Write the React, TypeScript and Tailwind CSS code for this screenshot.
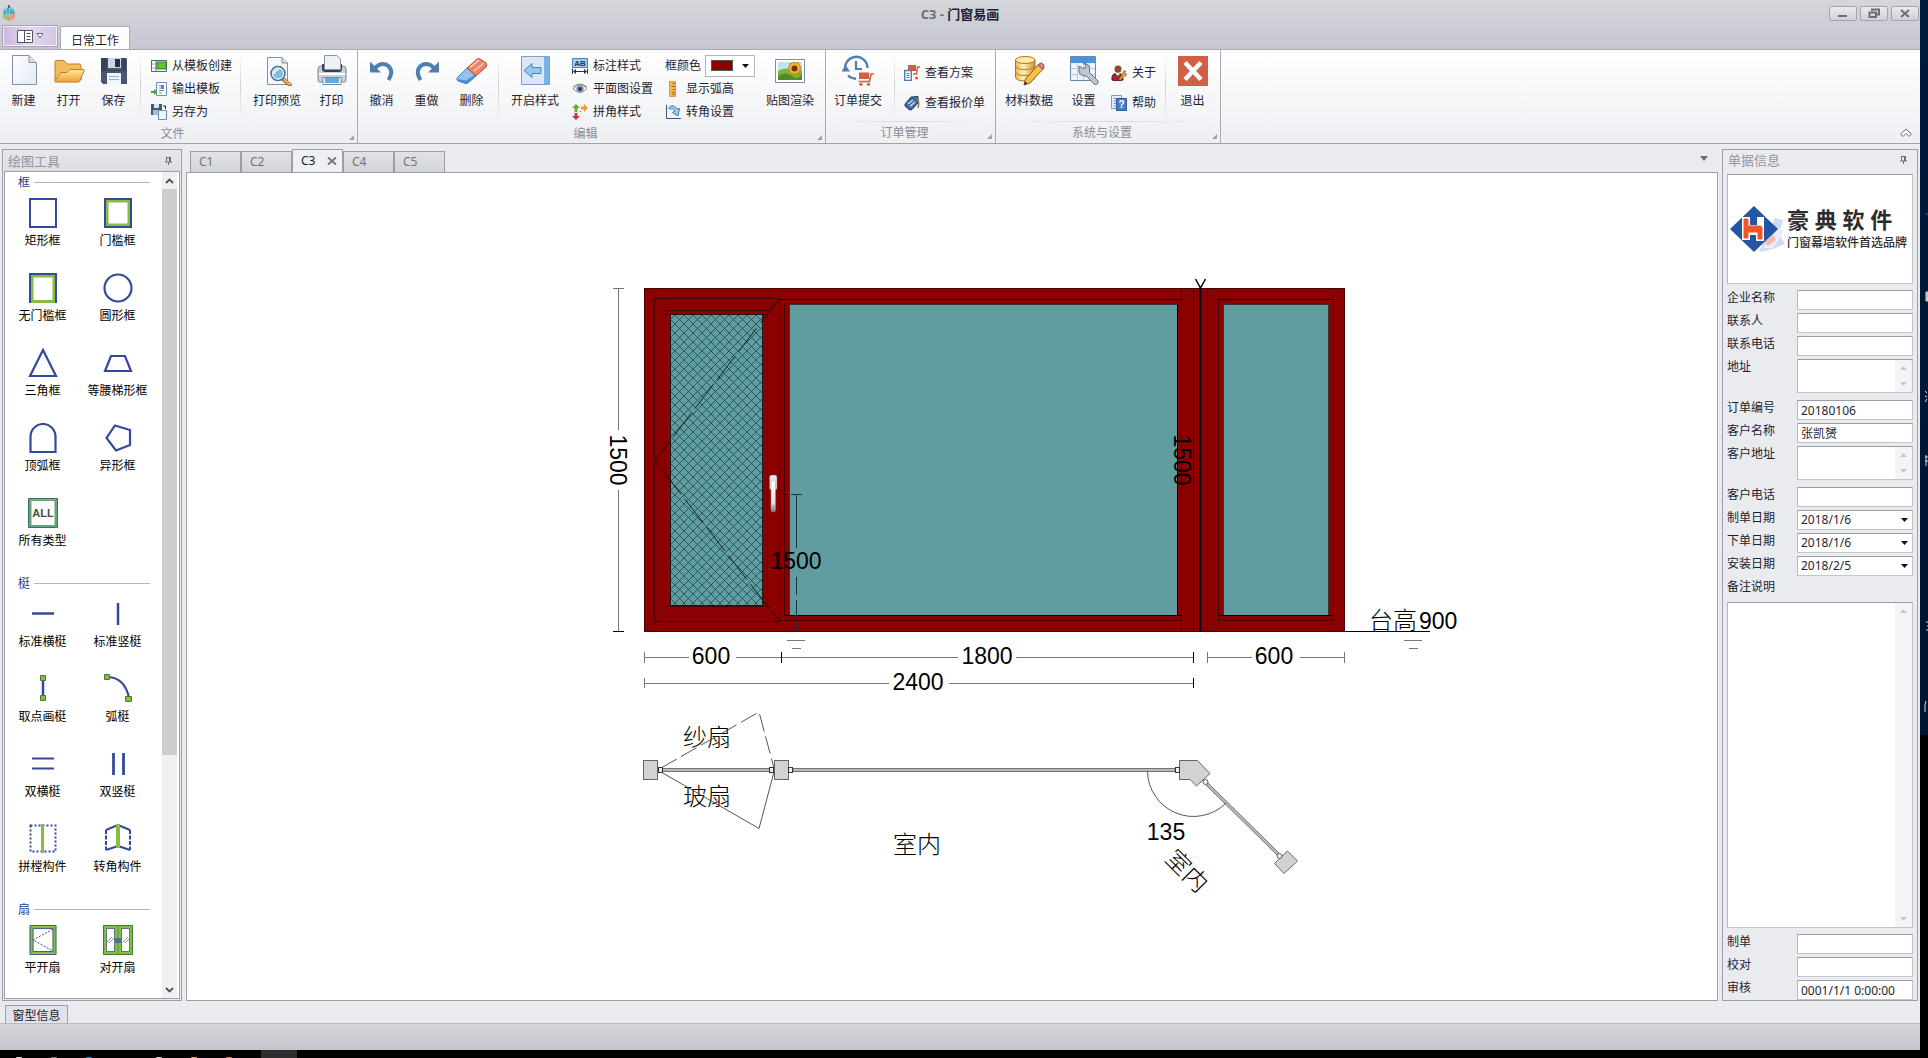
import React, { useState } from 'react';

const BLUE = '#34499b';
const GREEN = '#86bc40';

/* ---------- ribbon icons, 32px ---------- */

const NewIcon = () => (
    <svg width="32" height="32" viewBox="0 0 32 32">
        <defs><linearGradient id="page" x1="0" y1="0" x2="1" y2="1"><stop offset="0" stopColor="#fff" /><stop offset="1" stopColor="#e3e9f3" /></linearGradient></defs>
        <path d="M4.500 1.500H21L28.500 9V30.500H4.500Z" fill="url(#page)" stroke="#8191ab" />
        <path d="M21 1.500V8.500H28" fill="#d3deed" stroke="#8191ab" />
    </svg>
);

const OpenIcon = () => (
    <svg width="32" height="32" viewBox="0 0 32 32">
        <defs><linearGradient id="folder" x1="0" y1="0" x2="0" y2="1"><stop offset="0" stopColor="#ffe6a0" /><stop offset="1" stopColor="#efa236" /></linearGradient></defs>
        <path d="M2 26V8Q2 6.500 3.500 6.500H11L14 10H26Q28 10 28 12V26Z" fill="#f3bd5f" stroke="#bb7d25" />
        <path d="M2.500 28Q1.500 28 2 26.500L8 18.500H14L17 15.500H30.500Q31.500 15.500 31 17L27 26.500Q26.500 28 25 28Z" fill="url(#folder)" stroke="#bb7d25" />
    </svg>
);

const SaveIcon = () => (
    <svg width="32" height="32" viewBox="0 0 32 32">
        <path d="M3 4H28L29 5V30H5L3 28Z" fill="#4b566e" />
        <path d="M10 4H23V14H10Z" fill="#cdd6e3" />
        <path d="M17 5H22V13H17Z" fill="#27303f" />
        <path d="M3 4H9V16H24V4H28V17H3Z" fill="#39435a" />
        <path d="M9 19H23V30H9Z" fill="#eef4fb" />
        <path d="M11 22.500H21M11 25.500H21" stroke="#8eb0d6" />
    </svg>
);

const PreviewIcon = () => (
    <svg width="32" height="32" viewBox="0 0 32 32">
        <path d="M6.500 3.500H21L26.500 9V30.500H6.500Z" fill="#f6f8fc" stroke="#8191ab" />
        <path d="M21 3.500V9H26.500" fill="#d3deed" stroke="#8191ab" />
        <path d="M22 25L29 31" stroke="#a96a2c" strokeWidth="4" strokeLinecap="round" />
        <path d="M23 25.500L29 30.500" stroke="#f1b565" strokeWidth="2" strokeLinecap="round" />
        <circle cx="17" cy="19.500" r="7" fill="#b5dcf7" stroke="#4c6c94" strokeWidth="1.500" />
        <circle cx="17" cy="19.500" r="5.500" fill="#7dbdea" stroke="#fff" />
        <path d="M13 20Q14 15.500 18 15.500" stroke="#fff" strokeWidth="1.500" fill="none" />
    </svg>
);

const PrintIcon = () => (
    <svg width="32" height="32" viewBox="0 0 32 32">
        <path d="M2 15Q2 12 5 12H27Q30 12 30 15V26Q30 28 28 28H4Q2 28 2 26Z" fill="#c7cfdb" stroke="#7c8797" />
        <path d="M3 20H29" stroke="#fff" strokeWidth="2" />
        <path d="M6 10H26V15Q26 18 23 18H9Q6 18 6 15Z" fill="#3a4251" />
        <path d="M8.500 1.500H21L24.500 5V15.500H8.500Z" fill="#eef1f6" stroke="#8a94a6" />
        <path d="M7 23.500H25V30.500H7Z" fill="#fff" stroke="#7c8797" />
        <path d="M9 24H23V29H9Z" fill="#62aae2" />
    </svg>
);

const UndoIcon = () => (
    <svg width="32" height="32" viewBox="0 0 32 32">
        <path d="M9 14Q14 8.500 20 10.500Q29 15 22.500 26" fill="none" stroke="#4f80ad" strokeWidth="4" />
        <path d="M4 7.500L4 18.500H15Z" fill="#4f80ad" />
    </svg>
);

const RedoIcon = () => (
    <svg width="32" height="32" viewBox="0 0 32 32">
        <path d="M23 14Q18 8.500 12 10.500Q3 15 9.500 26" fill="none" stroke="#4f80ad" strokeWidth="4" />
        <path d="M28 7.500L28 18.500H17Z" fill="#4f80ad" />
    </svg>
);

const EraserIcon = () => (
    <svg width="32" height="32" viewBox="0 0 32 32">
        <path d="M1 24L11 14L20 22L12 29Q10 30 8 29L2 27Q0.500 26 1 24Z" fill="#8ec3f2" stroke="#547db0" />
        <path d="M1 25L10 26.500L20 20V22L12 29Q10 30 8 29L2 27Z" fill="#4c8ed6" />
        <path d="M11 14L21 5Q22.500 4 24 5L30 9Q31.500 10.500 30 13L20 22Z" fill="#ec8468" stroke="#b94d35" />
        <path d="M14 13.500L23 6M18 17L28 9" stroke="#fbd0c0" strokeWidth="1.500" />
    </svg>
);

const OpenStyleIcon = () => (
    <svg width="32" height="32" viewBox="0 0 32 32">
        <path d="M2.500 2.500H30.500V30.500H2.500Z" fill="#dbe6f5" stroke="#7e9fc8" />
        <path d="M25 3H30V30H25Z" fill="#78b5e6" />
        <path d="M5 16.500L13 9.500V13.500H22V19.500H13V23.500Z" fill="#8fc9f1" stroke="#4785b7" />
    </svg>
);

const RenderIcon = () => (
    <svg width="32" height="32" viewBox="0 0 32 32">
        <path d="M1.500 5.500H30.500V28.500H1.500Z" fill="#fff" stroke="#7d8ca8" />
        <path d="M4 8H28V17H4Z" fill="#c0e3f2" />
        <path d="M4 17Q12 12 17 17T28 15V26H4Z" fill="#79b43c" />
        <path d="M4 22Q12 17 18 22T28 20V26H4Z" fill="#4e8c25" />
        <path d="M19.500 8L21.500 9L24.500 8.500L25 11L27 13L26 15.500L26 18L23.500 19L21 20.500L18.500 19.500L16 19L15.500 16.500L14 14L15.500 11.500L16 9.500L18 9.500Z" fill="#f5b32c" stroke="#d27c17" />
        <circle cx="20.500" cy="14.500" r="3" fill="#6a3a17" />
    </svg>
);

const OrderIcon = () => (
    <svg width="32" height="32" viewBox="0 0 32 32">
        <path d="M3.500 17A11.200 11.200 0 1 1 25.500 14M6 21.500Q9 24.500 14 24.800" fill="none" stroke="#4f80ad" strokeWidth="2.400" />
        <path d="M-0.500 17.500L3.500 11L8 17.500Z" fill="#4f80ad" />
        <path d="M14 7V15H20" fill="none" stroke="#4f80ad" strokeWidth="2.200" />
        <path d="M17 18.500H27V25H17Z" fill="#d05f40" />
        <path d="M32 20H29L27.500 27.500H16.500" fill="none" stroke="#d05f40" strokeWidth="1.600" />
        <circle cx="19" cy="30.300" r="1.600" fill="#d05f40" /><circle cx="26.500" cy="30.300" r="1.600" fill="#d05f40" />
    </svg>
);

const MaterialIcon = () => (
    <svg width="32" height="32" viewBox="0 0 32 32">
        <defs><linearGradient id="gold" x1="0" x2="1"><stop offset="0" stopColor="#f0b545" /><stop offset="0.400" stopColor="#fff0b8" /><stop offset="1" stopColor="#d8902a" /></linearGradient></defs>
        <path d="M2.500 6V23Q3 27 12 27T22 23V6Z" fill="url(#gold)" stroke="#a9762a" />
        <ellipse cx="12.250" cy="6" rx="9.750" ry="3.500" fill="#ffe9a6" stroke="#a9762a" />
        <path d="M2.500 12Q4 15.500 12 15.500T22 12M2.500 18Q4 21.500 12 21.500T22 18" fill="none" stroke="#b37c27" />
        <path d="M11 31L12.500 25L26 10L31 14L17 29Z" fill="#f6c044" stroke="#8a5a1c" />
        <path d="M25 11L27.500 9Q31.500 9.500 31 13L29.500 15.500Z" fill="#e3808c" stroke="#95424f" />
        <path d="M11 31L12 27.500L14.500 29.500Z" fill="#333" />
    </svg>
);

const SettingsIcon = () => (
    <svg width="32" height="32" viewBox="0 0 32 32">
        <path d="M2.500 2.500H27.500V26.500H2.500Z" fill="#eef4fb" stroke="#6d88ad" />
        <path d="M3 3H27V9H3Z" fill="#4b93d8" />
        <path d="M3 14.500H27M3 20.500H27M9.500 9V26M15.500 9V26M21.500 9V26" stroke="#b5cbe4" />
        <path d="M11 12L15 14.500L17.500 14L18 11L15.500 9.500Q21 9.500 21.500 14.500L21.500 18.500L30 27Q30.500 31 26.500 30.500L18.500 22Q12 22.500 11 17Z" fill="#bdc6d3" stroke="#5e6b80" />
    </svg>
);

const ExitIcon = () => (
    <svg width="32" height="32" viewBox="0 0 32 32">
        <path d="M1 2H31V32H1Z" fill="#d05f45" />
        <path d="M8 8.500L24 25.500M24 8.500L8 25.500" stroke="#fff" strokeWidth="4.500" />
    </svg>
);

/* ---------- ribbon icons, 16px ---------- */

const smallIcons: Record<string, React.ReactNode> = {
    fromTemplate: (
        <g><path d="M.5 2.500H15.500V13.500H.5Z" fill="#fff" stroke="#44689b" /><path d="M1 6H15M1 10H15" stroke="#8aa8cf" /><path d="M5 2V14" stroke="#44689b" /><path d="M6 4H15V11H6Z" fill="#64c12f" stroke="#3a8714" /></g>
    ),
    exportTemplate: (
        <g><path d="M5.500 1.500H15.500V14.500H5.500Z" fill="#fff" stroke="#6a8fbd" /><path d="M8 4.500H13M8 7H13M8 9.500H13M8 12H11" stroke="#6a8fbd" /><path d="M10 4H13V8H10Z" fill="#5f84b5" /><path d="M0 10H3V8L6.500 11L3 14V12H0Z" fill="#4ba527" /></g>
    ),
    saveAs: (
        <g><path d="M0 0H11V11H0Z" fill="#4b566e" /><path d="M3 0H8V4H3Z" fill="#dde4ee" /><path d="M2 6H9V11H2Z" fill="#a9bdd8" /><path d="M7.500 6.500H15.500V15.500H7.500Z" fill="#f0f6fd" stroke="#6a8fbd" /><path d="M12 2H14.500V5" fill="none" stroke="#222" /></g>
    ),
    dimension: (
        <g><path d="M.5 .5H15.500V9.500H.5Z" fill="#9ecdf3" stroke="#5380b3" /><text x="8" y="8" textAnchor="middle" fontSize="8" fontWeight="700" fill="#1c3a63">AB</text><path d="M.5 10.500V16M15.500 10.500V16M2 13.500H14" stroke="#1d3357" /><path d="M1 13.500L4 11V16ZM15 13.500L12 11V16Z" fill="#1d3357" /></g>
    ),
    eye: (
        <g><path d="M1 8Q8 0 15 7.500Q8 15 1 8Z" fill="#fff" stroke="#a38b70" /><circle cx="8" cy="8" r="3.800" fill="#7f9dc4" /><circle cx="8" cy="8" r="2" fill="#2a3c5c" /><path d="M1 6Q8 0 15 6" fill="none" stroke="#8f7f6c" /></g>
    ),
    corner: (
        <g><path d="M4 0L8 4H5.500V8H2.500V4H0Z" fill="#6bab31" /><path d="M16 4L12 0V2.500H9V5.500H12V8Z" fill="#ee9b3b" /><path d="M4 16L8 12H5.500V9H2.500V12H0Z" fill="#c8373c" /><path d="M8 7L9 8" stroke="#555" /></g>
    ),
    ruler: (
        <g><path d="M4.500 .5H10.500V15.500H4.500Z" fill="#f8b64c" stroke="#dd9a38" /><path d="M7.500 2.500H10M6.500 5.500H10M7.500 8.500H10M6.500 11.500H10M7.500 13.500H10" stroke="#9a671f" /></g>
    ),
    rotate: (
        <g><path d="M1.500 1V14.500H16" fill="none" stroke="#3a5580" /><path d="M3.500 4Q8 -1 12 5L14.500 4.500L13 12L7.500 8.500L10 7Q7.500 3 5 5.500Z" fill="#9cd0f4" stroke="#4178ad" /></g>
    ),
    viewPlan: (
        <g><path d="M4 0H12V6H4Z" fill="#d05f40" /><path d="M16 2H13.500L12.500 9H9" fill="none" stroke="#d05f40" strokeWidth="1.500" /><circle cx="12.500" cy="13" r="1.600" fill="#d05f40" /><path d="M.7 5.500H7.300V15.500H.7Z" fill="#fff" stroke="#4f80ad" strokeWidth="1.400" /><path d="M2.500 8.500H5.500M2.500 10.500H5.500M2.500 12.500H5.500" stroke="#4f80ad" /></g>
    ),
    quote: (
        <g><path d="M1 9L7 2L14 1.500L14 8L8 14.500Q6.500 15.500 5 14.500L1 11Z" fill="#3d67a6" stroke="#21406f" /><path d="M4 9L9 5M6 11.500L11 7" stroke="#c9ddf4" strokeWidth="1.500" /><path d="M12 3Q16 6 14 13" fill="none" stroke="#a56d55" strokeWidth="1.500" /></g>
    ),
    about: (
        <g><circle cx="7" cy="4" r="3.500" fill="#8c4b22" /><path d="M1 15Q0 8 7 8Q12 8 12 15Q6 17 1 15Z" fill="#a3262c" stroke="#691519" /><path d="M4 8L7 11L9 8Z" fill="#fff" /><path d="M8 14L12 9Q11 5.500 14.500 6L13.500 8L15.500 9Q15 12 12.500 11L9.500 15Z" fill="#f3b450" stroke="#a06a1e" /></g>
    ),
    help: (
        <g><path d="M.5 .5H10.500V13.500H.5Z" fill="#e7f0fa" stroke="#7c9cc6" /><path d="M2.500 3.500H5M2.500 6H5M2.500 8.500H5M2.500 11H5" stroke="#7c9cc6" /><path d="M5.500 3.500H15.500V15.500H5.500Z" fill="#4380ca" stroke="#2b5b9b" /><text x="10.500" y="13" textAnchor="middle" fontSize="10" fontWeight="700" fill="#fff">?</text></g>
    ),
};

const BigButton = ({ icon, label, wide }: { icon: React.ReactNode; label: string; wide?: boolean }) => (
    <button className={`flex flex-col items-center pt-1 ${wide ? 'w-16' : 'w-[45px]'}`}>
        {icon}
        <span className="mt-[7px] leading-4">{label}</span>
    </button>
);

const SmallButton = ({ icon, label, tall }: { icon: string; label: string; tall?: boolean }) => (
    <button className={`flex items-center gap-[5px] ${tall ? 'h-[30px]' : 'h-[23px]'}`}>
        <svg width="16" height="16" viewBox="0 0 16 16" fontFamily="Liberation Sans, sans-serif">{smallIcons[icon]}</svg>
        <span>{label}</span>
    </button>
);

const Separator = () => <div className="mx-1 mt-1 h-[66px] w-px bg-linear-to-b from-transparent via-[#cfd1d8] to-transparent" />;

const RibbonGroup = ({ title, className, children }: { title: string; className: string; children: React.ReactNode }) => (
    <section className="flex flex-col border-r border-[#a9abb2]">
        <div className={`flex h-[74px] ${className}`}>{children}</div>
        <div className="mx-4 h-px bg-linear-to-r from-transparent via-[#d3d5db] to-transparent" />
        <div className="relative flex-1 pt-px pr-3 text-center leading-5 text-[#8b8c95]">
            {title}
            <svg className="absolute right-[3px] bottom-1" width="5" height="5" viewBox="0 0 5 5"><path d="M5 0V5H0Z" fill="#a0a1a8" /></svg>
        </div>
    </section>
);

/* ---------- tool palette ---------- */

const toolSections = [
    { title: '框', items: [['rect', '矩形框'], ['sill', '门槛框'], ['noSill', '无门槛框'], ['circle', '圆形框'], ['triangle', '三角框'], ['trapezoid', '等腰梯形框'], ['arch', '顶弧框'], ['polygon', '异形框'], ['all', '所有类型']] },
    { title: '梃', items: [['hBar', '标准横梃'], ['vBar', '标准竖梃'], ['points', '取点画梃'], ['arc', '弧梃'], ['hBars', '双横梃'], ['vBars', '双竖梃'], ['join', '拼樘构件'], ['turn', '转角构件']] },
    { title: '扇', items: [['casement', '平开扇'], ['double', '对开扇']] },
];

const toolIcons: Record<string, React.ReactNode> = {
    rect: <path d="M2 1H28V29H2Z" stroke={BLUE} strokeWidth="2" />,
    sill: <g><path d="M4 3H26V27H4Z" stroke={GREEN} strokeWidth="3" /><path d="M2 1H28V29H2Z" stroke={BLUE} strokeWidth="2" /></g>,
    noSill: <g><path d="M4 3H26V28.500H4Z" stroke={GREEN} strokeWidth="3" /><path d="M2 30V1H28V30" stroke={BLUE} strokeWidth="2" /></g>,
    circle: <circle cx="15" cy="15" r="13.500" stroke={BLUE} strokeWidth="2.200" />,
    triangle: <path d="M15 2L28 28H2Z" stroke={BLUE} strokeWidth="2.200" />,
    trapezoid: <path d="M8 8H22L28 23H2Z" stroke={BLUE} strokeWidth="2.200" />,
    arch: <path d="M2.500 29V13.500A12.500 12.500 0 0 1 27.500 13.500V29Z" stroke={BLUE} strokeWidth="2.200" />,
    polygon: <path d="M12 2.500L27 7V22L13 27.500L3.500 15Z" stroke={BLUE} strokeWidth="2.200" />,
    all: <g><path d="M2 1.500H28V28.500H2Z" stroke="#6aa27c" strokeWidth="3" /><path d="M.5 .5H29.500V29.500H.5Z" stroke="#3f6f63" /><path d="M1 1.500H28" stroke={GREEN} /><text x="15" y="19" textAnchor="middle" fontSize="11" fontWeight="700" fill="#4a4a4a">ALL</text></g>,
    hBar: <path d="M4 14.500H26" stroke={BLUE} strokeWidth="2.500" />,
    vBar: <path d="M15 4V26" stroke={BLUE} strokeWidth="2.500" />,
    points: <g><path d="M15 4V24" stroke={BLUE} strokeWidth="2.500" /><path d="M12.500 1.500H17.500V6.500H12.500ZM12.500 21.500H17.500V26.500H12.500Z" fill={GREEN} stroke="#4a7a35" /></g>,
    arc: <g><path d="M5 3Q22 4 26 24" stroke={BLUE} strokeWidth="2.200" /><path d="M1.500 0.500H6.500V5.500H1.500ZM22.500 22.500H28.500V27.500H22.500Z" fill={GREEN} stroke="#4a7a35" /></g>,
    hBars: <path d="M4 9.500H26M4 19.500H26" stroke={BLUE} strokeWidth="2.200" />,
    vBars: <path d="M10.500 4V26M20.500 4V26" stroke={BLUE} strokeWidth="2.800" />,
    join: <g><path d="M2.500 1.500H27.500V27.500H2.500Z" stroke={BLUE} strokeWidth="2" strokeDasharray="2 2" /><path d="M14.500 0V29" stroke={GREEN} strokeWidth="3" /></g>,
    turn: <g><path d="M15 1L3 6M15 22L3 26M15 1L27 6M15 22L27 26" stroke={BLUE} strokeWidth="2" /><path d="M3 6V26M27 6V26" stroke={BLUE} strokeWidth="2" strokeDasharray="4 1.500" /><path d="M15 0V24" stroke={GREEN} strokeWidth="4" /></g>,
    casement: <g><path d="M3.500 2H26.500V28H3.500Z" stroke={GREEN} strokeWidth="3.500" /><path d="M2 .5H28V29.500H2ZM5 3.500H25V26.500H5Z" stroke="#47628d" /><path d="M25 4L5 15L25 26" stroke={BLUE} strokeDasharray="2 1.500" /></g>,
    double: <g><path d="M2 2H13V28H2ZM17 2H28V28H17Z" stroke={GREEN} strokeWidth="3.500" /><path d="M.5 .5H29.500V29.500H.5ZM15 0V30" stroke="#3f7d35" /><path d="M3.500 3.500H11.500V26.500H3.500ZM18.500 3.500H26.500V26.500H18.500Z" stroke="#47628d" strokeWidth=".8" /><path d="M4 17L9 12M6 18L11 13M20 17L25 12M22 18L26 14" stroke="#999" /><path d="M12 13H18V18H12Z" fill="#3f679c" opacity=".8" /></g>,
};

const PinIcon = () => (
    <svg width="7" height="8" viewBox="0 0 7 8" fill="none" stroke="#6c6d76"><path d="M1.500 .5H5.500V4.500M1.500 0V4.500M0 5H7M3.500 5V8" /><path d="M5 0V5" strokeWidth="2" /></svg>
);

const ToolPanel = () => (
    <aside className="flex w-[180px] shrink-0 flex-col border border-[#9c9ea8] bg-[#eaebef] p-px">
        <header className="flex h-5 items-center justify-between bg-linear-to-b from-[#e6e7eb] to-[#dcdde2] px-1 pr-2 text-[13px] leading-4 text-[#9496a1]">
            绘图工具 <PinIcon />
        </header>
        <div className="flex min-h-0 flex-1 border border-[#9c9ea8] bg-white">
            <div className="min-h-0 flex-1 overflow-hidden">
                {toolSections.map(section => (
                    <section key={section.title} className="mb-[6px]">
                        <h3 className="flex h-5 items-center gap-1 pt-px pr-3 pl-[13px] text-[#1f3f94]">
                            {section.title}
                            <span className="h-px flex-1 bg-[#b0b6c4]" />
                        </h3>
                        <div className="grid w-[150px] grid-cols-2 text-black">
                            {section.items.map(([icon, label]) => (
                                <button key={icon} className="flex h-[75px] flex-col items-center pt-[6px]">
                                    <svg width="30" height="30" viewBox="0 0 30 30" fill="none" fontFamily="Liberation Sans, sans-serif">{toolIcons[icon]}</svg>
                                    <span className="mt-[5px] leading-4 whitespace-nowrap">{label}</span>
                                </button>
                            ))}
                        </div>
                    </section>
                ))}
            </div>
            <div className="mr-[2px] flex w-[15px] flex-col bg-[#f0f0f0]">
                <button aria-label="上移" className="flex h-[17px] items-center justify-center"><svg width="9" height="6" viewBox="0 0 9 6"><path d="M1 5L4.500 1.500L8 5" fill="none" stroke="#505050" strokeWidth="1.800" /></svg></button>
                <div className="grow-5 basis-0 bg-[#cdcdcd]" />
                <div className="grow-2 basis-0" />
                <button aria-label="下移" className="flex h-[17px] items-center justify-center"><svg width="9" height="6" viewBox="0 0 9 6"><path d="M1 1L4.500 4.500L8 1" fill="none" stroke="#505050" strokeWidth="1.800" /></svg></button>
            </div>
        </div>
    </aside>
);

/* ---------- drawing ---------- */

const WindowDrawing = () => (
    <svg className="shrink-0" width="1024" height="633" viewBox="440 270 1024 633" fontFamily="'Liberation Sans', 'Noto Sans CJK SC', sans-serif" fontSize="23" fill="#000">
        <defs>
            <pattern id="mesh" width="9" height="9" patternUnits="userSpaceOnUse">
                <path d="M0 0L9 9M9 0L0 9" stroke="#1c484b" strokeWidth=".8" />
            </pattern>
            <linearGradient id="handle" x1="0" y1="0" x2="0" y2="1"><stop offset="0" stopColor="#fff" /><stop offset=".7" stopColor="#e6e6e6" /><stop offset="1" stopColor="#777" /></linearGradient>
        </defs>

        {/* frames */}
        <g fill="#8b0000" stroke="#4a0000" shapeRendering="crispEdges">
            <rect x="644.500" y="288.500" width="700" height="343" />
            <rect x="654.500" y="298.500" width="125" height="323" />
            <rect x="665.500" y="310.500" width="102" height="296" />
            <path d="M665 314.500H768M780 620.500H1182M784.500 304V616" />
            <path d="M780 299.500H1182M779.500 299V621M1181.500 289V631M1193.500 289V631M1207.500 289V631" stroke="#1c0000" />
            <rect x="1218.500" y="299.500" width="115" height="321" />
            <path d="M1218 299.500H1334" stroke="#1c0000" />
        </g>
        <path d="M655 299L666 311M779 299L768 311M655 621L666 607M779 621L768 607M644.500 631.500L654.500 621.500M1182 299L1193 288M1207 288L1218 299M1344 288L1333 299M1207 631L1218 621M1344 631L1333 621" stroke="#4e1a1a" />

        {/* glass */}
        <g fill="#609da0" stroke="#1a1a1a" shapeRendering="crispEdges">
            <rect x="670.500" y="314.500" width="92" height="291" />
            <rect x="789.500" y="304.500" width="388" height="311" stroke="#3c3030" />
            <rect x="1223.500" y="304.500" width="105" height="311" stroke="#3c3030" />
            <path d="M785 615.500H1182M1218 615.500H1334M1177.500 304V616" stroke="#000" />
        </g>
        <rect x="671" y="315" width="92" height="290" fill="url(#mesh)" />
        <path d="M779 299L655 460.500L779 621" fill="none" stroke="#111" strokeWidth=".9" strokeDasharray="30 6" />

        {/* coupling marker */}
        <path d="M1195.500 279L1200.500 288L1205.500 279" fill="none" stroke="#000" strokeWidth="1.500" />
        <path d="M1200.500 286V632" stroke="#000" strokeWidth="1.500" />

        <rect x="769.500" y="475" width="7.500" height="15" rx="2" fill="#e8e8e8" stroke="#8a5050" strokeWidth=".5" />
        <rect x="771" y="480" width="4.500" height="32" rx="2" fill="url(#handle)" stroke="#999" strokeWidth=".5" />

        {/* dimensions */}
        <g stroke="#777" shapeRendering="crispEdges">
            <path d="M618.500 288V430M618.500 490V631M613 288.500H624" />
            <path d="M644.500 657.500H689M736 657.500H958M1016 657.500H1193M1207 657.500H1252M1300 657.500H1344" />
            <path d="M644.500 652V663M1207.500 652V663M1344.500 652V663M644.500 683.500H889M949 683.500H1193M644.500 678V688" />
            <path d="M787 640.500H805M792 648.500H801M1404 640.500H1422M1409 648.500H1418" />
        </g>
        <g stroke="#000" shapeRendering="crispEdges">
            <path d="M613 631.500H624M781.500 652V663M1193.500 652V663M1193.500 678V688M1344 631.500H1430" />
            <path d="M791 494.500H802M796.500 494V548" stroke="#17383a" />
            <path d="M796.500 577V631" stroke="#17383a" strokeDasharray="18 5" />
        </g>
        <g textAnchor="middle">
            <text transform="translate(610 460) rotate(90)">1500</text>
            <text transform="translate(1174 460) rotate(90)">1500</text>
            <text x="796" y="569">1500</text>
            <text x="711" y="664">600</text>
            <text x="987" y="664">1800</text>
            <text x="1274" y="664">600</text>
            <text x="918" y="690">2400</text>
            <text x="1166" y="840">135</text>
        </g>
        <text x="1419" y="629">900</text>
        <g fontSize="24" fontWeight="300" textAnchor="middle">
            <text x="1393" y="629">台高</text>
            <text x="707" y="746">纱扇</text>
            <text x="707" y="805">玻扇</text>
            <text x="917" y="853">室内</text>
            <text transform="translate(1181 877) rotate(45)">室内</text>
        </g>

        {/* plan view */}
        <g fill="#b8b8b8" stroke="#777" strokeWidth="1">
            <path d="M662 768.500H770V771.500H662ZM793 768.500H1175V771.500H793Z" />
            <path d="M1206 785L1208 783L1279 853L1277 855Z" />
        </g>
        <g fill="#d2d2d2" stroke="#666">
            <rect x="643.500" y="760.500" width="14" height="19" />
            <rect x="774.500" y="760.500" width="14" height="19" />
            <path d="M1179.500 760.500H1197.500L1210 773.500L1196.500 786L1190 779.500H1179.500Z" />
            <path d="M1287.500 851L1297.500 861L1284 873.500L1274.500 863.500Z" />
        </g>
        <g fill="#eee" stroke="#333">
            <rect x="658.500" y="767.500" width="4" height="5" />
            <rect x="769.500" y="767.500" width="4" height="5" />
            <rect x="788.500" y="767.500" width="4" height="5" />
            <rect x="1175.500" y="767.500" width="4" height="5" />
            <circle cx="1205.500" cy="782" r="2.500" stroke="#666" />
            <circle cx="1279.500" cy="856" r="2.500" stroke="#666" />
        </g>
        <g fill="none" stroke="#444" strokeWidth=".9">
            <path d="M661 768L759 712L774 768" strokeDasharray="18 5" />
            <path d="M661 772L759 828.500L774 772" />
            <path d="M1147.500 771A46 46 0 0 0 1226 803" />
        </g>
    </svg>
);

const DocumentArea = () => {
    const [active, setActive] = useState('C3');
    return (
        <main className="flex min-w-0 flex-1 flex-col">
            <nav className="relative flex h-[23px] items-end pl-1">
                {['C1', 'C2', 'C3', 'C4', 'C5'].map(tab => (
                    <button
                        key={tab}
                        onClick={() => setActive(tab)}
                        className={`flex w-[51px] items-center justify-between border border-b-0 border-[#9c9ea8] pr-[5px] pl-2 ${tab === active ? 'h-[23px] bg-[#eff0f3] text-[#222]' : 'h-[21px] bg-linear-to-b from-[#e2e3e7] to-[#d3d4d9] text-[#72737c]'}`}
                    >
                        {tab}
                        {tab === active && <svg width="10" height="8" viewBox="0 0 10 8"><path d="M1 0.500L9 7.500M9 0.500L1 7.500" stroke="#777882" strokeWidth="2" /></svg>}
                    </button>
                ))}
                <svg className="absolute right-[10px] bottom-[11px]" width="8" height="5" viewBox="0 0 8 5"><path d="M0 0H8L4 5Z" fill="#6c6d76" /></svg>
            </nav>
            <div className="flex min-h-0 flex-1 items-center justify-center overflow-hidden border border-[#9c9ea8] bg-white">
                <WindowDrawing />
            </div>
        </main>
    );
};

/* ---------- order panel ---------- */

const box = 'border border-[#c3c5cc] border-t-[#9a9ca6] border-l-[#b4b6be] bg-white';

const Arrow = ({ up, color }: { up?: boolean; color: string }) => (
    <svg width="7" height="4" viewBox="0 0 7 4"><path d={up ? 'M0 4H7L3.500 0Z' : 'M0 0H7L3.500 4Z'} fill={color} /></svg>
);

const Memo = ({ id, className }: { id: string; className: string }) => (
    <div className={`flex ${box} ${className}`}>
        <textarea id={id} className="min-w-0 flex-1 resize-none overflow-hidden px-1 outline-none" />
        <div className="flex w-[17px] flex-col items-center justify-between bg-[#f4f4f6] py-[6px]">
            <Arrow up color="#c6c7cc" />
            <Arrow color="#c6c7cc" />
        </div>
    </div>
);

const Field = ({ id, label, type = 'text', value = '' }: { id: string; label: string; type?: 'text' | 'memo' | 'date'; value?: string }) => (
    <div className={`flex justify-between last:h-5 ${type === 'memo' ? 'h-[41px]' : 'h-[23px]'}`}>
        <label htmlFor={id} className="leading-4">{label}</label>
        {type === 'text' && <input id={id} defaultValue={value} className={`h-5 w-[116px] px-[3px] outline-none ${box}`} />}
        {type === 'memo' && <Memo id={id} className="h-[34px] w-[116px]" />}
        {type === 'date' && (
            <div className="relative h-5 w-[116px]">
                <select id={id} className={`block h-5 w-full appearance-none px-[3px] outline-none ${box}`}><option>{value}</option></select>
                <div className="pointer-events-none absolute top-2 right-[5px]"><Arrow color="#111" /></div>
            </div>
        )}
    </div>
);

const Logo = () => (
    <div className={`mb-[6px] flex h-[110px] items-center overflow-hidden pl-px ${box}`}>
        <svg className="shrink-0" width="58" height="50" viewBox="0 0 58 50">
            <path d="M30 48L46 14L54 16L50 30L56 40L44 45Z" fill="#cfdcf0" />
            <path d="M34 44L50 24L55 27L44 44Z" fill="#e9eef8" />
            <path d="M36 38L44 31L47 36L39 42Z" fill="#f5b9a6" />
            <path d="M25 2L49 25L25 48L1 25Z" fill="#2355a4" />
            <path d="M13 13H21V21H28V13H35V37H27V31H21V36H13Z" fill="#fff" />
            <path d="M15 15H19V22H31Q33 22 33 24V35H29V28H19V34H15Z" fill="#f0562a" stroke="#f0562a" />
        </svg>
        <div className="flex flex-col gap-1 whitespace-nowrap text-[#2c2c2c]">
            <div className="text-[22px] leading-6 font-bold">豪 典 软 件</div>
            <div className="leading-4 font-medium">门窗幕墙软件首选品牌</div>
        </div>
    </div>
);

const OrderPanel = () => (
    <aside className="flex w-[196px] shrink-0 flex-col border border-[#9c9ea8] bg-[#eaebef] px-1">
        <header className="mb-1 flex h-5 items-center justify-between px-px pr-[6px] text-[13px] leading-4 text-[#9496a1]">
            单据信息 <PinIcon />
        </header>
        <Logo />
        <Field id="company" label="企业名称" />
        <Field id="contact" label="联系人" />
        <Field id="phone" label="联系电话" />
        <Field id="address" label="地址" type="memo" />
        <Field id="orderNo" label="订单编号" value="20180106" />
        <Field id="customer" label="客户名称" value="张凯赟" />
        <Field id="customerAddress" label="客户地址" type="memo" />
        <Field id="customerPhone" label="客户电话" />
        <Field id="createDate" label="制单日期" type="date" value="2018/1/6" />
        <Field id="orderDate" label="下单日期" type="date" value="2018/1/6" />
        <Field id="installDate" label="安装日期" type="date" value="2018/2/5" />
        <label htmlFor="remark" className="h-[23px] leading-4">备注说明</label>
        <Memo id="remark" className="mb-[6px] min-h-0 flex-1" />
        <Field id="creator" label="制单" />
        <Field id="checker" label="校对" />
        <Field id="auditor" label="审核" value="0001/1/1 0:00:00" />
    </aside>
);

/* ---------- shell ---------- */

const TitleBar = () => (
    <header className="flex h-[50px] flex-col border-b border-[#a9abb2] bg-linear-to-b from-[#d6d7dc] to-[#c5c6cf]">
        <div className="relative flex h-[27px] items-center justify-between pl-[2px]">
            <svg width="14" height="16" viewBox="0 0 14 16">
                <circle cx="7" cy="8" r="6.500" fill="#8fcfd4" />
                <path d="M1 8L7 11L13 8V13L7 16L1 13Z" fill="#ec9a7b" />
                <path d="M2 9L7 12V15L2 13Z" fill="#8bc47a" />
                <path d="M3 5V9M6 3V9M9 4V9M11 5V9" stroke="#2fa3b9" strokeWidth="1.500" />
                <path d="M7 0V3" stroke="#7a5a5a" strokeWidth="2" />
            </svg>
            <h1 className="absolute inset-x-0 pt-[2px] text-center text-[13px] font-bold text-[#222233]"><span className="text-[#6c6d76]">C3 - </span>门窗易画</h1>
            <div className="relative flex gap-[3px] pr-px">
                {[
                    ['最小化', 'M2 9H11'],
                    ['还原', 'M5 4V2.500H12V7.500H9.500M2.500 5.500H9V10H2.500Z'],
                    ['关闭', 'M3 3L11 10M11 3L3 10'],
                ].map(([name, d]) => (
                    <button key={name} aria-label={name} className="flex h-[15px] w-7 items-center justify-center rounded-xs border border-[#a3a5ae] bg-linear-to-b from-[#ececef] to-[#cfd0d6]">
                        <svg width="14" height="12" viewBox="0 0 14 12"><path d={d} fill="none" stroke="#6c6d76" strokeWidth="2" /></svg>
                    </button>
                ))}
            </div>
        </div>
        <div className="flex h-[23px] pl-[3px]">
            <button aria-label="菜单" className="flex h-5 w-[54px] items-center justify-center gap-[3px] border border-[#f2eef8] bg-linear-to-r from-[#cdb9df] via-[#e4daf0] to-[#d4c4e5] outline outline-[#a9a4bb]">
                <svg width="16" height="13" viewBox="0 0 16 13"><path d="M.5 .5H15.500V12.500H.5ZM7.500 .5V12.500" fill="#fff" stroke="#55565f" /><path d="M9.500 3.500H13.500M9.500 6.500H13.500M9.500 9.500H13.500" stroke="#55565f" /></svg>
                <svg width="8" height="6" viewBox="0 0 8 6"><path d="M1 .5H7L4 5Z" fill="#fff" stroke="#6c6d76" /></svg>
            </button>
            <button className="-mb-px ml-[3px] h-[23px] w-[70px] border border-b-0 border-[#a9abb2] bg-white pt-1 leading-5 text-[#1e1e32]">日常工作</button>
        </div>
    </header>
);

const Ribbon = () => (
    <div className="relative flex h-[94px] border-b border-[#a0a2ab] bg-linear-to-b from-white to-[#eeeff3] text-[#1e1e32]">
        <RibbonGroup title="文件" className="pr-[3px] pl-px">
            <BigButton icon={<NewIcon />} label="新建" />
            <BigButton icon={<OpenIcon />} label="打开" />
            <BigButton icon={<SaveIcon />} label="保存" />
            <Separator />
            <div className="pt-1 pr-1 pl-[6px]">
                <SmallButton icon="fromTemplate" label="从模板创建" />
                <SmallButton icon="exportTemplate" label="输出模板" />
                <SmallButton icon="saveAs" label="另存为" />
            </div>
            <Separator />
            <BigButton icon={<PreviewIcon />} label="打印预览" wide />
            <BigButton icon={<PrintIcon />} label="打印" />
        </RibbonGroup>
        <RibbonGroup title="编辑" className="pr-[3px] pl-px">
            <BigButton icon={<UndoIcon />} label="撤消" />
            <BigButton icon={<RedoIcon />} label="重做" />
            <BigButton icon={<EraserIcon />} label="删除" />
            <Separator />
            <BigButton icon={<OpenStyleIcon />} label="开启样式" wide />
            <div className="px-[5px] pt-1">
                <SmallButton icon="dimension" label="标注样式" />
                <SmallButton icon="eye" label="平面图设置" />
                <SmallButton icon="corner" label="拼角样式" />
            </div>
            <div className="pt-1 pr-[3px] pl-[7px]">
                <div className="flex h-[23px] items-center gap-1">
                    <span>框颜色</span>
                    <button aria-label="框颜色" className="flex h-[22px] w-[50px] items-center justify-between border border-[#b4b6be] bg-white px-[5px]">
                        <span className="h-[11px] w-[22px] border border-[#555] bg-[#8b0000]" />
                        <Arrow color="#111" />
                    </button>
                </div>
                <SmallButton icon="ruler" label="显示弧高" />
                <SmallButton icon="rotate" label="转角设置" />
            </div>
            <BigButton icon={<RenderIcon />} label="贴图渲染" wide />
        </RibbonGroup>
        <RibbonGroup title="订单管理" className="pr-[5px]">
            <BigButton icon={<OrderIcon />} label="订单提交" wide />
            <Separator />
            <div className="px-[5px] pt-2">
                <SmallButton icon="viewPlan" label="查看方案" tall />
                <SmallButton icon="quote" label="查看报价单" tall />
            </div>
        </RibbonGroup>
        <RibbonGroup title="系统与设置" className="pr-[5px] pl-px">
            <BigButton icon={<MaterialIcon />} label="材料数据" wide />
            <BigButton icon={<SettingsIcon />} label="设置" />
            <div className="px-[5px] pt-2">
                <SmallButton icon="about" label="关于" tall />
                <SmallButton icon="help" label="帮助" tall />
            </div>
            <Separator />
            <BigButton icon={<ExitIcon />} label="退出" />
        </RibbonGroup>
        <button aria-label="折叠" className="absolute right-2 bottom-[5px]">
            <svg width="12" height="10" viewBox="0 0 12 10"><path d="M.7 6L6 1L11.300 6L9 8.500L6 5.500L3 8.500Z" fill="#fff" stroke="#6c6d76" /></svg>
        </button>
    </div>
);

/* taskbar: colour of every pinned app */
const pinned = ['bg-[#dddddd]', 'bg-[#777777]', 'bg-[#1e7fd6]', 'bg-black', 'bg-[#cccccc]', 'bg-[#e2b33c]', 'bg-[#c98a33]'];

export default function App() {
    return (
        <div className="flex h-screen flex-col bg-black font-['Noto_Sans','Noto_Sans_CJK_SC',sans-serif] text-xs text-[#1e1e32]">
            <div className="flex min-h-0 flex-1">
                <div className="flex min-w-0 flex-1 flex-col bg-[#eaebef]">
                    <TitleBar />
                    <Ribbon />
                    <div className="flex min-h-0 flex-1 gap-1 px-[2px] pt-[5px] pb-1">
                        <ToolPanel />
                        <DocumentArea />
                        <OrderPanel />
                    </div>
                    <div className="h-[18px] px-[5px]">
                        <button className="h-[18px] w-[63px] border border-b-0 border-[#9c9ea8] bg-[#e2e3e8] leading-5">窗型信息</button>
                    </div>
                    <footer className="h-[27px] border-t border-[#b9bac2] bg-linear-to-b from-[#d6d7dc] to-[#c5c6cd]" />
                </div>
                <div className="w-2 bg-linear-to-b from-[#001a3c] via-[#001430] via-70% to-black to-70%">
                    <svg width="8" height="730" viewBox="0 0 8 730" fill="none" stroke="#cdd5e0">
                        <path d="M6 214H8" stroke="#2f6fc0" />
                        <path d="M6 292H8V301H6Z" fill="#c9b9a8" />
                        <path d="M5 391L7 393M5 396L7 397M5 402L7 399M5 457H8M5 461H8M6 455V466M6 622H8M7 626H8M6 630H8M6 701L5 705V712" />
                    </svg>
                </div>
            </div>
            <div className="flex h-2 shrink-0 items-end pl-4">
                {pinned.map((color, i) => (
                    <div key={i} className="flex w-[35px] justify-start"><span className={`h-px w-[6px] rounded-t ${color}`} /></div>
                ))}
                <div className="h-2 w-9 bg-[#2e2e30]" />
            </div>
        </div>
    );
}
